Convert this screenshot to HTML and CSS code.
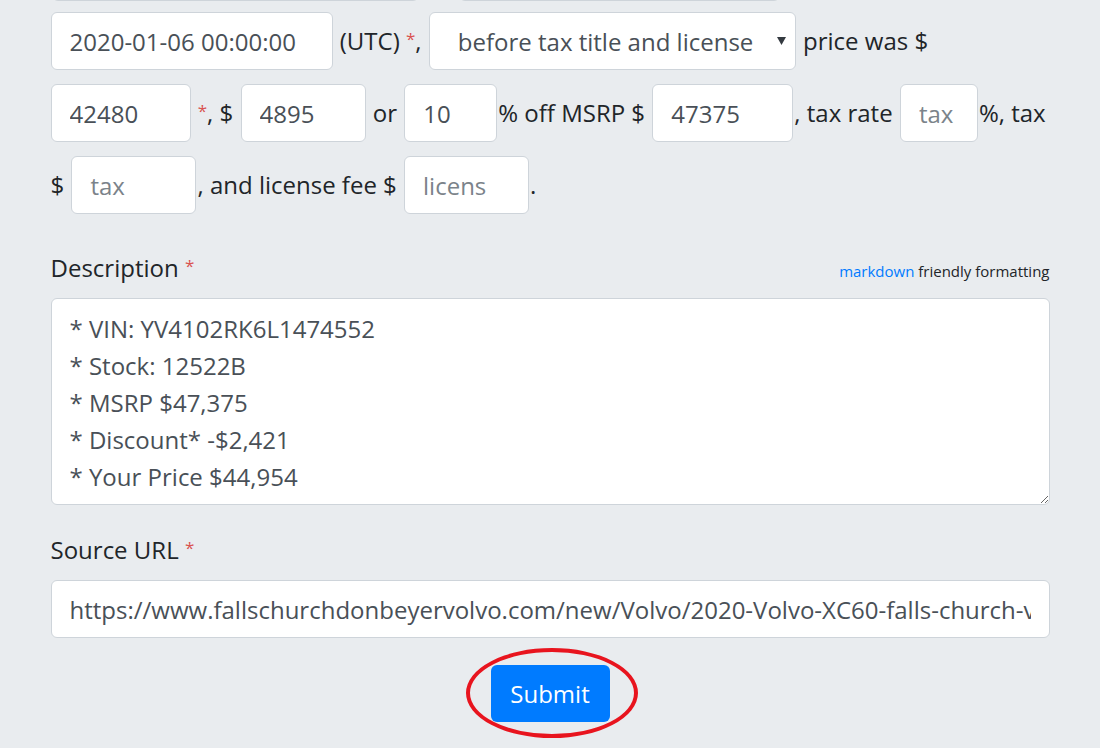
FILE: index.html
```html
<!DOCTYPE html>
<html lang="en">
<head>
<meta charset="utf-8">
<title>Deal form</title>
<link rel="stylesheet" href="styles.css">
</head>
<body>
<form class="form">
  <div class="prev-row">
    <span class="field prev-a"></span><span class="field prev-b"></span>
  </div>

  <p class="sentence"><input class="field w-date" type="text" value="2020-01-06 00:00:00"> (UTC) <span class="req">*</span>, <select class="field select"><option>before tax title and license</option></select> price was $ <input class="field w-price" type="text" value="42480"> <span class="req">*</span>, $ <input class="field w-disc" type="text" value="4895"> or <input class="field w-pct" type="text" value="10">% off MSRP $ <input class="field w-msrp" type="text" value="47375">, tax rate <input class="field w-rate" type="text" placeholder="tax">%, tax $ <input class="field w-tax" type="text" placeholder="tax">, and license fee $ <input class="field w-lic" type="text" placeholder="licens">.</p>

  <div class="group group-desc">
    <div class="label-row">
      <label class="label">Description <span class="req">*</span></label>
      <small class="hint"><a class="link" href="#">markdown</a> friendly formatting</small>
    </div>
    <textarea class="field area" rows="5">* VIN: YV4102RK6L1474552
* Stock: 12522B
* MSRP $47,375
* Discount* -$2,421
* Your Price $44,954</textarea>
  </div>

  <div class="group group-url">
    <label class="label">Source URL <span class="req">*</span></label>
    <input class="field full" type="text" value="https://www.fallschurchdonbeyervolvo.com/new/Volvo/2020-Volvo-XC60-falls-church-virginia">
  </div>

  <div class="actions">
    <span class="btn-wrap">
      <button class="btn" type="button">Submit</button>
      <span class="circle"></span>
    </span>
  </div>
</form>
</body>
</html>
```

FILE: styles.css
```css
* { box-sizing: border-box; }

html, body {
  margin: 0;
  padding: 0;
  background: #e9ecef;
  overflow: hidden;
}

body {
  font-family: "Open Sans", "Noto Sans", sans-serif;
  font-size: 24px;
  color: #212529;
  height: 748px;
}

.form {
  width: 999px;
  margin: 0 auto;
}

.prev-row {
  display: flex;
  gap: 38px;
  margin-top: -57px;
  height: 58px;
}

.prev-a { width: 367px; }
.prev-b { width: 321px; }

.field {
  display: inline-block;
  height: 58px;
  background: #fff;
  border: 1.5px solid #ced4da;
  border-radius: 6px;
  font-family: inherit;
  font-size: 24px;
  color: #495057;
  padding: 0 18px;
  margin: 0 1px;
  vertical-align: middle;
  outline: none;
}

.field::placeholder { color: #7b838a; }

.sentence {
  margin: 4px 0 0;
  line-height: 72px;
}

.sentence .field {
  vertical-align: top;
  margin-top: 7px;
  margin-bottom: 7px;
}

.w-date { width: 282px; }
.w-price { width: 140px; }
.sentence .w-date, .sentence .w-price { margin-left: 0; }
.w-disc { width: 125px; }
.w-pct { width: 93px; }
.w-msrp { width: 141px; }
.w-rate { width: 78px; }
.w-tax { width: 125px; }
.w-lic { width: 125px; }

.select {
  width: 367px;
  appearance: none;
  -webkit-appearance: none;
  padding-left: 28px;
  background-image: url("data:image/svg+xml;utf8,<svg xmlns='http://www.w3.org/2000/svg' width='10' height='8'><path d='M0 0h10L5 8z' fill='%23343a40'/></svg>");
  background-repeat: no-repeat;
  background-position: right 9px center;
  background-size: 9px 8px;
}

.req {
  color: #d9534f;
  font-size: 17px;
  vertical-align: 5px;
  line-height: 1;
}

.group-desc { margin-top: 28px; }

.label-row {
  display: flex;
  justify-content: space-between;
  align-items: baseline;
}

.label {
  display: block;
  line-height: 37px;
  margin-bottom: 12px;
}

.hint {
  font-size: 15px;
  color: #212529;
}

.link {
  color: #007bff;
  text-decoration: none;
}

.area {
  display: block;
  width: 100%;
  height: 207px;
  margin: 0;
  padding: 11px 18px 7px;
  line-height: 37px;
  resize: vertical;
}

.group-url { margin-top: 26px; }

.full {
  display: block;
  width: 100%;
  margin: 0;
}

.actions {
  display: flex;
  justify-content: center;
  margin-top: 27px;
}

.btn-wrap {
  position: relative;
  display: inline-block;
}

.btn {
  display: block;
  width: 119px;
  height: 57px;
  background: #007bff;
  color: #fff;
  border: none;
  border-radius: 6px;
  font-family: inherit;
  font-size: 24px;
  padding: 0;
}

.circle {
  position: absolute;
  left: -25px;
  top: -17px;
  width: 172px;
  height: 90px;
  border: 4px solid #e8141e;
  border-radius: 50%;
  pointer-events: none;
}
```
